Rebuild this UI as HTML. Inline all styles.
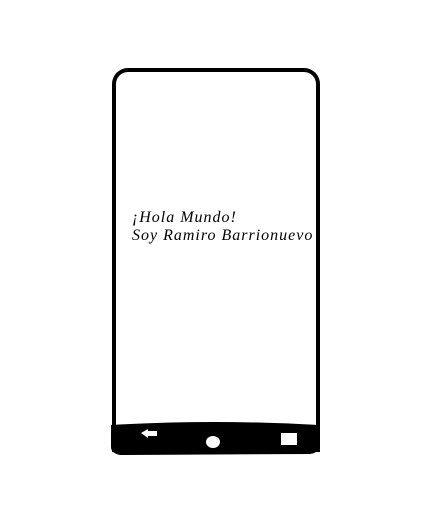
<!DOCTYPE html>
<html><head><style>
html,body{margin:0;padding:0;width:442px;height:522px;background:#fff;overflow:hidden;position:relative}
.frame{position:absolute;left:112px;top:68px;width:200px;height:380px;border:4px solid #000;border-bottom:none;border-radius:16px 16px 0 0}
.txt{position:absolute;left:132px;top:209px;width:182px;overflow:hidden;white-space:nowrap;font-family:"Liberation Serif",serif;font-style:italic;font-size:16px;letter-spacing:1px;line-height:18px;color:#000}
</style></head><body>
<div class="frame"></div>
<div class="txt">¡Hola Mundo!<br>Soy Ramiro Barrionuevo</div>
<svg width="442" height="522" style="position:absolute;left:0;top:0">
<path d="M111 425 Q215 419 319 425 L319 447 Q318 453 310 454 L120 455 Q111 453 111 447 Z" fill="#000"/>
<path d="M141 433 L148 429 L148 431 L157 431 L157 436 L148 436 L148 438 Z" fill="#fff"/>
<ellipse cx="213" cy="442" rx="7" ry="6" fill="#fff"/>
<rect x="281" y="433" width="16" height="12" fill="#fff"/>
</svg>
</body></html>
